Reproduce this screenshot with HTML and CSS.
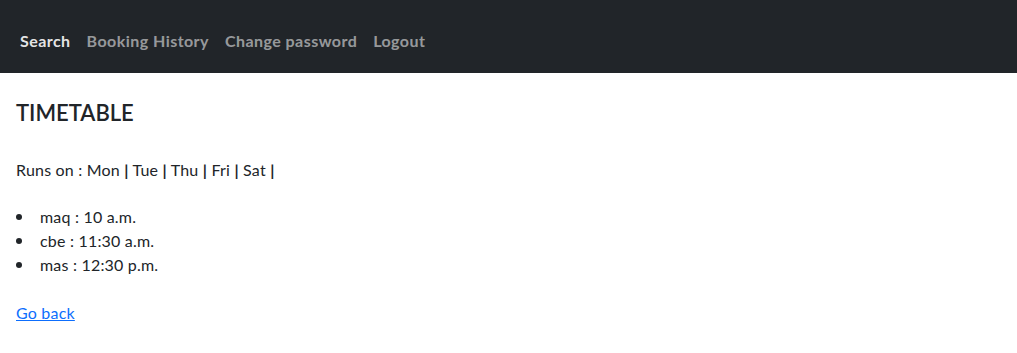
FILE: index.html
```html
<!DOCTYPE html>
<html lang="en">
<head>
    <meta charset="UTF-8">
    <meta name="viewport" content="width=device-width, initial-scale=1.0">
    <title>Timetable</title>
    <link rel="stylesheet" href="styles.css">
</head>
<body>
    <nav class="navbar">
        <a href="#" class="nav-link active">Search</a>
        <a href="#" class="nav-link">Booking History</a>
        <a href="#" class="nav-link">Change password</a>
        <a href="#" class="nav-link">Logout</a>
    </nav>

    <div class="container">
        <h4 class="section-title">TIMETABLE</h4>

        <p class="runs-on">Runs on : Mon <b>|</b> Tue <b>|</b> Thu <b>|</b> Fri <b>|</b> Sat <b>|</b></p>

        <ul class="stops">
            <li>maq : 10 a.m.</li>
            <li>cbe : 11:30 a.m.</li>
            <li>mas : 12:30 p.m.</li>
        </ul>

        <a href="#" class="back-link">Go back</a>
    </div>
</body>
</html>
```

FILE: styles.css
```css
:root {
    --dark-bg: #212529;
    --text-color: #212529;
    --link-color: #0d6efd;
}

body {
    margin: 0;
    font-family: "Segoe UI", Lato, "Liberation Sans", sans-serif;
    font-size: 16px;
    line-height: 1.5;
    letter-spacing: 0.2px;
    color: var(--text-color);
    background-color: #fff;
}

.navbar {
    display: flex;
    align-items: center;
    height: 73px;
    padding: 8px 16px 0;
    background-color: var(--dark-bg);
    box-sizing: border-box;
}

.nav-link {
    padding: 8px 4px;
    margin-right: 8px;
    font-weight: bold;
    letter-spacing: 0.45px;
    color: rgba(255, 255, 255, 0.55);
    text-decoration: none;
}

.nav-link.active {
    color: rgba(255, 255, 255, 0.9);
}

.container {
    padding: 0 16px;
}

.section-title {
    margin: 27px 0 32px;
    font-size: 22px;
    font-weight: 600;
    line-height: 1.2;
    letter-spacing: 0;
}

.runs-on {
    margin: 0 0 23px;
}

.stops {
    margin: 0 0 24px;
    padding: 0;
    list-style: none;
}

.stops li {
    display: flex;
    align-items: center;
}

.stops li::before {
    content: "";
    width: 6px;
    height: 6px;
    margin-right: 18px;
    border-radius: 50%;
    background-color: var(--text-color);
}

.back-link {
    color: var(--link-color);
}
```
